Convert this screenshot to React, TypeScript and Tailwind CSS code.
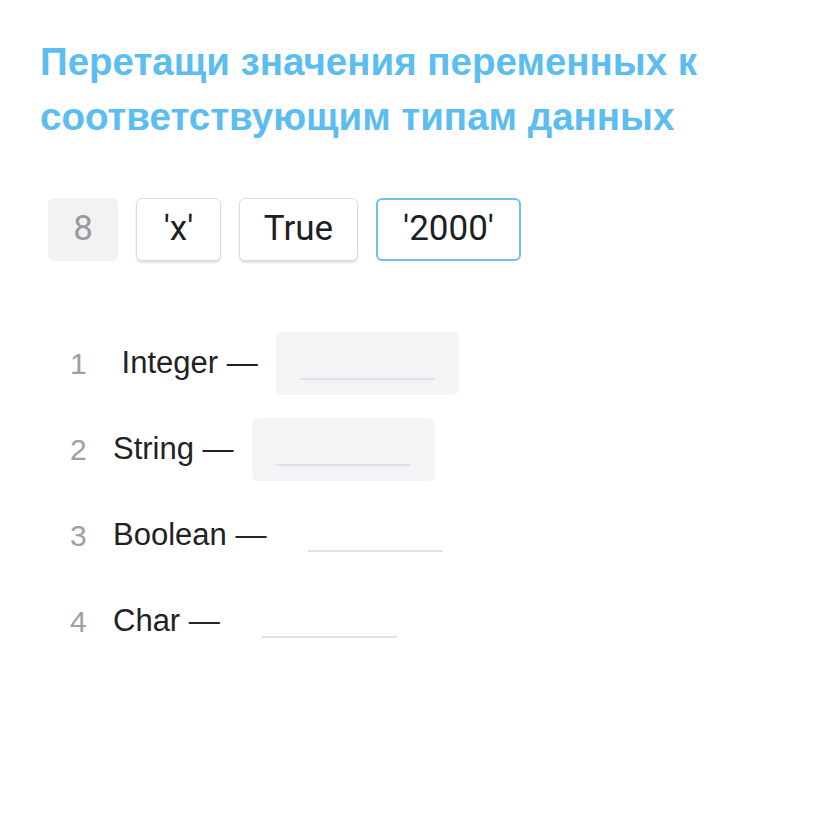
const chips = [
  { text: "8", kind: "used", w: "w-[70px]" },
  { text: "'x'", kind: "normal", w: "w-[85px]" },
  { text: "True", kind: "normal", w: "w-[119px]" },
  { text: "'2000'", kind: "active", w: "w-[145px]" },
];

const rows = [
  { n: 1, label: " Integer —", filled: true },
  { n: 2, label: "String —", filled: true },
  { n: 3, label: "Boolean —", filled: false },
  { n: 4, label: "Char —", filled: false },
];

function Chip({ text, kind, w }: { text: string; kind: string; w: string }) {
  let cls = "bg-white border border-[#dcdcdc] shadow-[0_2px_2px_rgba(0,0,0,0.12)] text-[#1c1f24]";
  if (kind === "used") cls = "bg-[#f1f2f4] border border-transparent text-[#9a9a9a]";
  if (kind === "active") cls = "bg-white border-2 border-[#6cc2ea] text-[#1c1f24]";
  return (
    <div
      className={`h-[63px] ${w} rounded-md flex items-center justify-center text-[35px] ${cls}`}
      style={{ fontFamily: "Roboto, sans-serif" }}
    >
      {text}
    </div>
  );
}

export default function App() {
  return (
    <div className="w-[828px] h-[828px] bg-white px-10 pt-[34px] font-['Liberation_Sans',Arial,sans-serif]">
      <h1 className="text-[38.5px] leading-[55px] font-bold text-[#5bbdf0]">
        Перетащи значения переменных к
        <br />
        соответствующим типам данных
      </h1>

      <div className="flex gap-[18px] ml-2 mt-[54px]">
        {chips.map((c) => (
          <Chip key={c.text} text={c.text} kind={c.kind} w={c.w} />
        ))}
      </div>

      <div className="flex flex-col gap-[23px] mt-[71px] ml-[30px]">
        {rows.map((r) => (
          <div key={r.n} className="flex items-center h-[63px]">
            <span className="w-[43px] text-[30px] text-[#a0a0a0]">{r.n}</span>
            <span className="text-[31px] text-[#222] whitespace-pre">{r.label}</span>
            <div
              className={`ml-[18px] w-[183px] h-[63px] rounded-md flex flex-col justify-end pb-[15px] pl-6 ${
                r.filled ? "bg-[#f3f4f6]" : ""
              }`}
            >
              <div className="w-[135px] h-[2px] bg-[#dfe1e5]" />
            </div>
          </div>
        ))}
      </div>
    </div>
  );
}
